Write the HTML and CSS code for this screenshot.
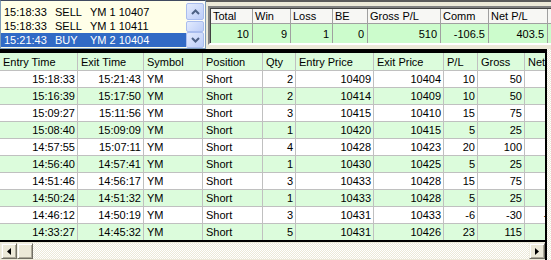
FILE: index.html
```html
<!DOCTYPE html>
<html lang="en">
<head>
    <meta charset="UTF-8">
    <title>Trade Log</title>
    <link rel="stylesheet" href="styles.css">
</head>
<body>
    <div class="top">
        <!-- Order fills list -->
        <div class="orders">
            <ul class="order-list">
                <li><span class="o-time">15:18:33</span><span class="o-side">SELL</span><span>YM 1 10407</span></li>
                <li><span class="o-time">15:18:33</span><span class="o-side">SELL</span><span>YM 1 10411</span></li>
                <li class="selected"><span class="o-time">15:21:43</span><span class="o-side">BUY</span><span>YM 2 10404</span></li>
            </ul>
            <div class="vscroll">
                <div class="xp-btn xp-up">
                    <svg width="9" height="6" viewBox="0 0 9 6"><polyline points="1,5 4.5,1.5 8,5" fill="none" stroke="#4d6185" stroke-width="2"/></svg>
                </div>
                <div class="xp-thumb"></div>
                <div class="xp-btn xp-down">
                    <svg width="9" height="6" viewBox="0 0 9 6"><polyline points="1,1 4.5,4.5 8,1" fill="none" stroke="#4d6185" stroke-width="2"/></svg>
                </div>
            </div>
        </div>

        <!-- Session totals -->
        <div class="summary">
            <div class="summary-box">
                <table class="summary-table">
                    <colgroup>
                        <col style="width: 42px">
                        <col style="width: 38px">
                        <col style="width: 42px">
                        <col style="width: 35px">
                        <col style="width: 73px">
                        <col style="width: 48px">
                        <col style="width: 59px">
                        <col style="width: 40px">
                    </colgroup>
                    <tr>
                        <th>Total</th><th>Win</th><th>Loss</th><th>BE</th><th>Gross P/L</th><th>Comm</th><th>Net P/L</th><th></th>
                    </tr>
                    <tr>
                        <td>10</td><td>9</td><td>1</td><td>0</td><td>510</td><td>-106.5</td><td>403.5</td><td></td>
                    </tr>
                </table>
            </div>
        </div>
    </div>

    <div class="bottom">
        <div class="grid-wrap">
            <div class="grid-clip">
                <table class="trades">
                    <colgroup>
                        <col style="width: 78px">
                        <col style="width: 66px">
                        <col style="width: 59px">
                        <col style="width: 60px">
                        <col style="width: 33px">
                        <col style="width: 78px">
                        <col style="width: 70px">
                        <col style="width: 34px">
                        <col style="width: 47px">
                        <col style="width: 53px">
                    </colgroup>
                    <thead>
                        <tr>
                            <th>Entry Time</th><th>Exit Time</th><th>Symbol</th><th>Position</th><th>Qty</th>
                            <th>Entry Price</th><th>Exit Price</th><th>P/L</th><th>Gross</th><th>Net</th>
                        </tr>
                    </thead>
                    <tbody>
                        <tr><td class="num">15:18:33</td><td class="num">15:21:43</td><td>YM</td><td>Short</td><td class="num">2</td><td class="num">10409</td><td class="num">10404</td><td class="num">10</td><td class="num">50</td><td class="num">41.48</td></tr>
                        <tr><td class="num">15:16:39</td><td class="num">15:17:50</td><td>YM</td><td>Short</td><td class="num">2</td><td class="num">10414</td><td class="num">10409</td><td class="num">10</td><td class="num">50</td><td class="num">41.48</td></tr>
                        <tr><td class="num">15:09:27</td><td class="num">15:11:56</td><td>YM</td><td>Short</td><td class="num">3</td><td class="num">10415</td><td class="num">10410</td><td class="num">15</td><td class="num">75</td><td class="num">62.22</td></tr>
                        <tr><td class="num">15:08:40</td><td class="num">15:09:09</td><td>YM</td><td>Short</td><td class="num">1</td><td class="num">10420</td><td class="num">10415</td><td class="num">5</td><td class="num">25</td><td class="num">20.74</td></tr>
                        <tr><td class="num">14:57:55</td><td class="num">15:07:11</td><td>YM</td><td>Short</td><td class="num">4</td><td class="num">10428</td><td class="num">10423</td><td class="num">20</td><td class="num">100</td><td class="num">82.96</td></tr>
                        <tr><td class="num">14:56:40</td><td class="num">14:57:41</td><td>YM</td><td>Short</td><td class="num">1</td><td class="num">10430</td><td class="num">10425</td><td class="num">5</td><td class="num">25</td><td class="num">20.74</td></tr>
                        <tr><td class="num">14:51:46</td><td class="num">14:56:17</td><td>YM</td><td>Short</td><td class="num">3</td><td class="num">10433</td><td class="num">10428</td><td class="num">15</td><td class="num">75</td><td class="num">62.22</td></tr>
                        <tr><td class="num">14:50:24</td><td class="num">14:51:32</td><td>YM</td><td>Short</td><td class="num">1</td><td class="num">10433</td><td class="num">10428</td><td class="num">5</td><td class="num">25</td><td class="num">20.74</td></tr>
                        <tr><td class="num">14:46:12</td><td class="num">14:50:19</td><td>YM</td><td>Short</td><td class="num">3</td><td class="num">10431</td><td class="num">10433</td><td class="num">-6</td><td class="num">-30</td><td class="num">-42.78</td></tr>
                        <tr><td class="num">14:33:27</td><td class="num">14:45:32</td><td>YM</td><td>Short</td><td class="num">5</td><td class="num">10431</td><td class="num">10426</td><td class="num">23</td><td class="num">115</td><td class="num">93.7</td></tr>
                    </tbody>
                </table>
            </div>
            <div class="hscroll">
                <div class="cl-btn">
                    <svg width="4" height="7" viewBox="0 0 4 7"><polygon points="4,0 0,3.5 4,7" fill="#000"/></svg>
                </div>
                <div class="cl-btn cl-thumb"></div>
                <div class="track"></div>
                <div class="cl-btn">
                    <svg width="4" height="7" viewBox="0 0 4 7"><polygon points="0,0 4,3.5 0,7" fill="#000"/></svg>
                </div>
            </div>
        </div>
        <div class="side-strip"></div>
    </div>
</body>
</html>
```

FILE: styles.css
```css
* {
    box-sizing: border-box;
}

body {
    margin: 0;
    width: 551px;
    height: 260px;
    overflow: hidden;
    background-color: #ece9d8;
    font-family: "Liberation Sans", Arial, sans-serif;
    font-size: 11px;
    color: black;
}

table {
    border-collapse: separate;
    border-spacing: 0;
    table-layout: fixed;
}

th, td {
    padding: 0;
    font-weight: normal;
    white-space: nowrap;
    overflow: hidden;
}

/* ---- top panel ---- */

.top {
    display: flex;
    height: 49px;
}

.orders {
    width: 206px;
    display: flex;
    border: 1px solid #7f9db9;
    border-top-color: #404a60;
    background-color: #ffffe8;
}

.order-list {
    list-style: none;
    margin: 0;
    padding: 4px 0 0 0;
    width: 185px;
}

.order-list li {
    display: flex;
    height: 14px;
    line-height: 14px;
    padding-left: 3px;
}

.order-list li.selected {
    background-color: #316ac5;
    color: white;
}

.o-time {
    width: 51px;
}

.o-side {
    width: 35px;
}

.vscroll {
    width: 19px;
    display: flex;
    flex-direction: column;
    padding: 2px 1px 0 0;
    background-color: #fbfbf6;
}

.xp-btn, .xp-thumb {
    border: 1px solid #a9bdee;
    border-radius: 2px;
    background: linear-gradient(135deg, #e3ebfe, #bccdf8);
    display: flex;
    align-items: center;
    justify-content: center;
}

.xp-up {
    height: 17px;
}

.xp-thumb {
    height: 11px;
    margin-top: 1px;
}

.xp-down {
    height: 16px;
}

.summary {
    flex: 1;
    min-width: 0;
    overflow: hidden;
    border-top: 2px solid #5a5a5a;
    padding: 4px 0 0 2px;
}

.summary-box {
    border: 2px solid;
    border-color: #808080 #ffffff #ffffff #808080;
    border-right: none;
    height: 39px;
    overflow: hidden;
}

.summary-table {
    width: 377px;
    border-left: 1px solid #404040;
    border-top: 1px solid #404040;
}

.summary-table th,
.summary-table td {
    border-right: 1px solid #a0a0a0;
}

.summary-table th {
    height: 15px;
    line-height: 14px;
    text-align: left;
    padding-left: 2px;
    background-color: #f7f7f4;
    border-bottom: 1px solid #a0a0a0;
}

.summary-table td {
    height: 20px;
    text-align: right;
    padding-right: 3px;
    background-color: #ccfccc;
}

/* ---- trades grid ---- */

.bottom {
    display: flex;
}

.grid-wrap {
    width: 547px;
    border-right: 2px solid #000;
}

.grid-clip {
    overflow: hidden;
    border-top: 4px solid #000;
    border-bottom: 2px solid #000;
    height: 193px;
}

.trades {
    width: 578px;
}

.trades th,
.trades td {
    border-right: 1px solid #c0c0c0;
    border-bottom: 1px solid #c0c0c0;
    padding: 0 2px 0 3px;
    text-align: left;
}

.trades th {
    height: 18px;
    background-color: #dcfcdc;
}

.trades td {
    height: 17px;
    background-color: #ffffff;
}

.trades tbody tr:nth-child(even) td {
    background-color: #dcfcdc;
}

.trades tbody tr:last-child td {
    border-bottom: none;
    height: 16px;
}

.trades td.num {
    text-align: right;
}

.hscroll {
    display: flex;
    height: 18px;
    padding: 1px 0 1px 1px;
}

.cl-btn {
    width: 16px;
    height: 16px;
    background-color: #ece9d8;
    border: 1px solid;
    border-color: #f1efe2 #716f64 #716f64 #f1efe2;
    box-shadow: inset 1px 1px #ffffff, inset -1px -1px #aca899;
    display: flex;
    align-items: center;
    justify-content: center;
}

.track {
    flex: 1;
    background: repeating-conic-gradient(#ece9d8 0 25%, #ffffff 0 50%) 0 0 / 2px 2px;
}

.side-strip {
    flex: 1;
    height: 211px;
    background: repeating-conic-gradient(#ece9d8 0 25%, #ffffff 0 50%) 0 0 / 2px 2px;
}
```
